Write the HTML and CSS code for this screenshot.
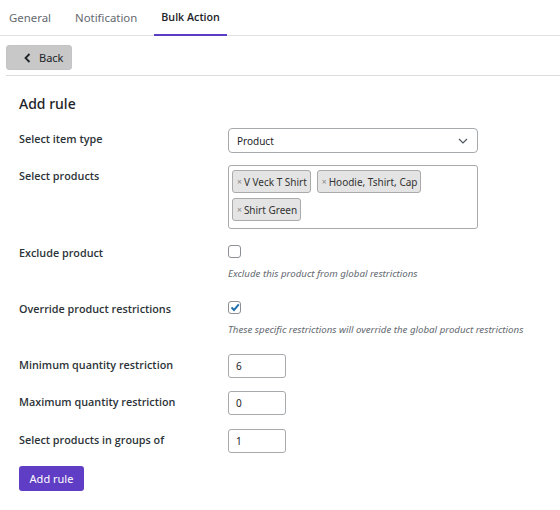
FILE: index.html
```html
<!DOCTYPE html>
<html>
<head>
<meta charset="utf-8">
<link rel="stylesheet" href="styles.css">
</head>
<body>
<nav class="tabs">
  <a class="tab">General</a>
  <a class="tab">Notification</a>
  <a class="tab active">Bulk Action</a>
</nav>
<div class="toolbar">
  <button class="back"><svg width="7" height="10" viewBox="0 0 7 10"><path d="M5.5 1 L1.5 5 L5.5 9" fill="none" stroke="#1d2327" stroke-width="1.8"/></svg><span>Back</span></button>
</div>
<main class="form">
  <h2 class="title">Add rule</h2>
  <div class="row r-select">
    <label class="label">Select item type</label>
    <div class="field">
      <div class="select"><span>Product</span><svg width="10" height="6" viewBox="0 0 10 6"><path d="M1 1 L5 5 L9 1" fill="none" stroke="#50575e" stroke-width="1.2"/></svg></div>
    </div>
  </div>
  <div class="row r-multi">
    <label class="label">Select products</label>
    <div class="field">
      <div class="multi">
        <span class="tag"><i>×</i>V Veck T Shirt</span>
        <span class="tag"><i>×</i>Hoodie, Tshirt, Cap</span>
        <span class="tag"><i>×</i>Shirt Green</span>
      </div>
    </div>
  </div>
  <div class="row r-check1">
    <label class="label">Exclude product</label>
    <div class="field">
      <span class="check"></span>
      <p class="desc">Exclude this product from global restrictions</p>
    </div>
  </div>
  <div class="row r-check2">
    <label class="label">Override product restrictions</label>
    <div class="field">
      <span class="check checked"><svg width="10" height="9" viewBox="0 0 10 9"><path d="M1.5 4.5 L4 7 L8.8 1.3" fill="none" stroke="#2271b1" stroke-width="2"/></svg></span>
      <p class="desc">These specific restrictions will override the global product restrictions</p>
    </div>
  </div>
  <div class="row r-num">
    <label class="label">Minimum quantity restriction</label>
    <div class="field"><div class="num">6</div></div>
  </div>
  <div class="row r-num">
    <label class="label">Maximum quantity restriction</label>
    <div class="field"><div class="num">0</div></div>
  </div>
  <div class="row r-num last">
    <label class="label">Select products in groups of</label>
    <div class="field"><div class="num">1</div></div>
  </div>
  <button class="primary">Add rule</button>
</main>
</body>
</html>
```
FILE: styles.css
```css
* { box-sizing: border-box; }
body {
  margin: 0;
  font-family: "Noto Sans", "Open Sans", sans-serif;
  color: #1d2327;
  background: #fff;
}
.tabs {
  display: flex;
  gap: 11px;
  padding-left: 2px;
  height: 36px;
  border-bottom: 1px solid #e2e2e2;
}
.tab {
  padding: 0 7px;
  height: 36px;
  line-height: 35px;
  font-size: 11.4px;
  color: #646970;
}
.tab:nth-child(2) { margin-left: -1px; }
.tab.active {
  color: #1d2327;
  font-family: "Open Sans", sans-serif;
  font-size: 10.7px;
  font-weight: 600;
  border-bottom: 2px solid #5b3cc4;
  line-height: 34px;
  margin-bottom: -1px;
  margin-left: -1px;
  height: 36px;
  padding: 0 7px 0 7px;
}
.toolbar {
  margin-left: 6px;
  padding-top: 9px;
  padding-bottom: 5px;
  border-bottom: 1px solid #dcdcde;
}
.back {
  display: flex;
  align-items: center;
  width: 66px;
  height: 25px;
  padding: 0 0 0 17px;
  border: 1px solid #c3c4c7;
  border-radius: 3px;
  background: #c8c8c8;
  font-family: inherit;
  font-size: 11px;
  color: #1d2327;
}
.back svg { margin-right: 8px; }
.form { padding-left: 19px; }
.title {
  margin: 18px 0 14px;
  font-size: 14px;
  line-height: 20px;
  font-weight: 500;
}
.row { display: flex; }
.label {
  width: 209px;
  flex: none;
  font-family: "Open Sans", "Noto Sans", sans-serif;
  font-size: 10.8px;
  font-weight: 600;
  line-height: 22px;
  color: #2c3338;
}
.field { flex: none; }
.r-select { margin-bottom: 12px; }
.r-multi { margin-bottom: 13px; }
.r-check1 { margin-bottom: 16px; }
.r-check2 { margin-bottom: 16px; }
.r-num { margin-bottom: 13px; }
.r-num + .r-num { margin-bottom: 14px; }
.r-num.last { margin-bottom: 13px; }
.select {
  width: 250px;
  height: 25px;
  border: 1px solid #a7aaad;
  border-radius: 4px;
  display: flex;
  align-items: center;
  justify-content: space-between;
  padding: 0 9px 0 8px;
  font-size: 10px;
}
.multi {
  width: 250px;
  height: 64px;
  border: 1px solid #a7aaad;
  border-radius: 3px;
  padding: 4px 3px;
  display: flex;
  flex-wrap: wrap;
  align-content: flex-start;
  gap: 5px 6px;
}
.tag {
  height: 23px;
  display: inline-flex;
  align-items: center;
  padding: 0 3px 0 4px;
  background: #e4e4e4;
  border: 1px solid #aaa;
  border-radius: 3px;
  font-size: 10px;
  color: #333;
}
.tag i {
  font-style: normal;
  font-size: 8.5px;
  color: #888;
  margin-right: 2px;
}
.check {
  display: flex;
  align-items: center;
  justify-content: center;
  width: 13px;
  height: 13px;
  margin-top: 3px;
  border: 1px solid #8c8f94;
  border-radius: 3px;
  background: #fff;
}
.desc {
  margin: 8px 0 0;
  font-size: 9.7px;
  line-height: 16px;
  font-style: italic;
  color: #646970;
}
.num {
  width: 58px;
  height: 24px;
  border: 1px solid #a7aaad;
  border-radius: 3px;
  padding-left: 7px;
  font-size: 10px;
  line-height: 22px;
}
.primary {
  width: 65px;
  height: 25px;
  border: none;
  border-radius: 3px;
  background: #5f3dc4;
  color: #fff;
  font-family: inherit;
  font-size: 11px;
  padding: 0;
}
```
